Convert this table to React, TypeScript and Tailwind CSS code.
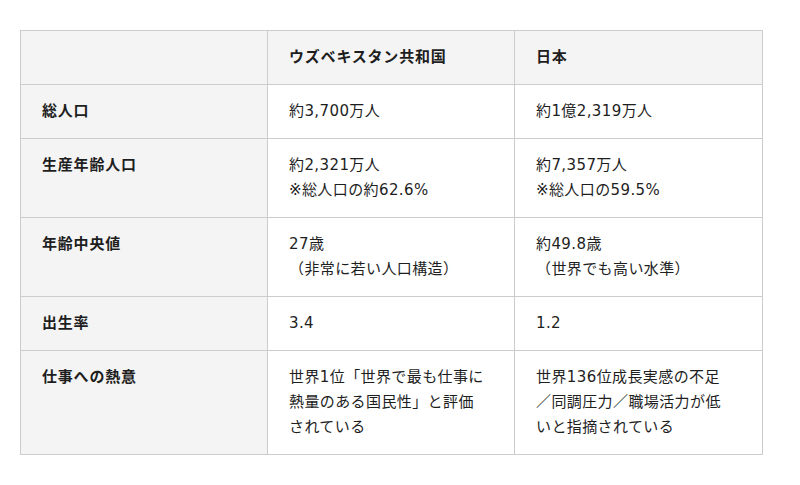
const rows: { label: string; uz: string[]; jp: string[] }[] = [
  { label: '総人口', uz: ['約3,700万人'], jp: ['約1億2,319万人'] },
  { label: '生産年齢人口', uz: ['約2,321万人', '※総人口の約62.6%'], jp: ['約7,357万人', '※総人口の59.5%'] },
  { label: '年齢中央値', uz: ['27歳', '（非常に若い人口構造）'], jp: ['約49.8歳', '（世界でも高い水準）'] },
  { label: '出生率', uz: ['3.4'], jp: ['1.2'] },
  {
    label: '仕事への熱意',
    uz: ['世界1位「世界で最も仕事に', '熱量のある国民性」と評価', 'されている'],
    jp: ['世界136位成長実感の不足', '／同調圧力／職場活力が低', 'いと指摘されている'],
  },
];

export default function App() {
  return (
    <div
      className="w-[800px] h-[485px] bg-white pt-[30px] pl-[20px] text-[15px] leading-[25px] text-[#1e1e1e]"
      style={{ fontFamily: '"DejaVu Sans", "Noto Sans CJK JP", sans-serif' }}
    >
      <table className="w-[742px] table-fixed border-collapse">
        <colgroup>
          <col className="w-[247px]" />
          <col className="w-[247px]" />
          <col className="w-[248px]" />
        </colgroup>
        <thead>
          <tr className="bg-[#f4f4f4] h-[54px]">
            <th className="border border-[#cccccc]" />
            <th className="border border-[#cccccc] px-[21px] text-left font-bold tracking-[0.8px]">
              ウズベキスタン共和国
            </th>
            <th className="border border-[#cccccc] px-[21px] text-left font-bold tracking-[0.8px]">日本</th>
          </tr>
        </thead>
        <tbody>
          {rows.map((r) => (
            <tr key={r.label}>
              <td className="border border-[#cccccc] bg-[#f4f4f4] px-[21px] py-[14px] align-top font-bold tracking-[0.8px]">
                {r.label}
              </td>
              <td className="border border-[#cccccc] px-[21px] py-[14px] align-top tracking-[0.4px]">
                {r.uz.map((l) => (
                  <div key={l}>{l}</div>
                ))}
              </td>
              <td className="border border-[#cccccc] px-[21px] py-[14px] align-top tracking-[0.4px]">
                {r.jp.map((l) => (
                  <div key={l}>{l}</div>
                ))}
              </td>
            </tr>
          ))}
        </tbody>
      </table>
    </div>
  );
}
